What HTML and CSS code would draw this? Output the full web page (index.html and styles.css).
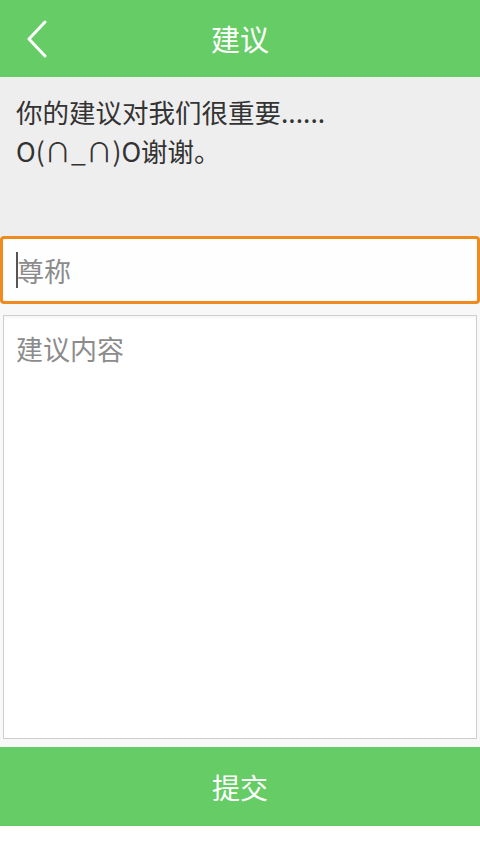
FILE: index.html
```html
<!DOCTYPE html>
<html lang="zh">
<head>
<meta charset="utf-8">
<link rel="stylesheet" href="styles.css">
</head>
<body>
<div class="page">
  <header class="topbar">
    <span class="back">
      <svg width="22" height="38" viewBox="0 0 22 38"><polyline points="19,2 3,19 19,36" fill="none" stroke="#fff" stroke-width="3" stroke-linecap="round" stroke-linejoin="round"/></svg>
    </span>
    <h1 class="title">建议</h1>
  </header>
  <section class="intro">
    <p class="line">你的建议对我们很重要......</p>
    <p class="line">O(∩_∩)O谢谢。</p>
  </section>
  <div class="form">
    <div class="name-field"><span class="caret"></span><span class="ph">尊称</span></div>
    <div class="content-field"><span class="ph">建议内容</span></div>
  </div>
  <div class="submit">提交</div>
</div>
</body>
</html>
```
FILE: styles.css
```css
html, body {
  margin: 0;
  padding: 0;
  background: #ffffff;
}
body {
  font-family: "Noto Sans CJK SC", "Noto Sans", sans-serif;
  width: 480px;
  height: 854px;
  overflow: hidden;
}
.page {
  display: flex;
  flex-direction: column;
  height: 854px;
}
.topbar {
  height: 77px;
  background: #66cc66;
  display: flex;
  align-items: center;
  justify-content: center;
  position: relative;
}
.back {
  position: absolute;
  left: 26px;
  top: 20px;
  display: block;
}
.back svg { display: block; }
.title {
  margin: 0;
  color: #ffffff;
  font-size: 29px;
  font-weight: normal;
  line-height: 1;
}
.intro {
  background: #eeeeee;
  height: 159px;
  padding: 15px 16px 0;
  box-sizing: border-box;
  display: flex;
  flex-direction: column;
}
.line {
  margin: 0;
  font-size: 26.5px;
  line-height: 39px;
  color: #333333;
  white-space: nowrap;
}
.form {
  background: #f8f8f8;
  display: flex;
  flex-direction: column;
}
.name-field {
  height: 68px;
  box-sizing: border-box;
  border: 3px solid #f08a1e;
  border-radius: 4px;
  background: #fefefe;
  display: flex;
  align-items: center;
  padding-left: 13px;
}
.caret {
  width: 2px;
  height: 36px;
  background: #555;
  margin-right: -1px;
}
.ph {
  font-size: 27px;
  color: #8c8c8c;
  line-height: 1;
}
.content-field {
  margin: 11px 3px 8px;
  height: 424px;
  box-sizing: border-box;
  border: 1px solid #cfcfcf;
  background: #ffffff;
  box-shadow: inset 0 3px 4px -2px rgba(0,0,0,0.06);
  padding: 19px 12px 0;
}
.submit {
  height: 79px;
  background: #66cc66;
  color: #ffffff;
  font-size: 28px;
  display: flex;
  align-items: center;
  justify-content: center;
}
```
